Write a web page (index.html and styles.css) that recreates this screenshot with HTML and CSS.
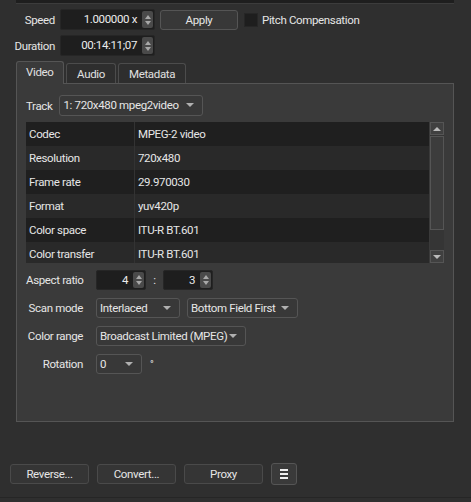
FILE: index.html
```html
<!DOCTYPE html>
<html lang="en">
<head>
    <meta charset="UTF-8">
    <title>Properties</title>
    <link rel="stylesheet" href="styles.css">
</head>
<body>
    <div class="topbar"></div>

    <div class="row speed-row">
        <label class="lbl">Speed</label>
        <div class="spin wide"><span class="val">1.000000 x</span><span class="arrows"><i class="up"></i><i class="down"></i></span></div>
        <button class="btn apply">Apply</button>
        <span class="check"></span>
        <span class="check-text">Pitch Compensation</span>
    </div>

    <div class="row dur-row">
        <label class="lbl">Duration</label>
        <div class="spin wide"><span class="val">00:14:11;07</span><span class="arrows"><i class="up"></i><i class="down"></i></span></div>
    </div>

    <div class="tabs">
        <div class="tab active">Video</div>
        <div class="tab">Audio</div>
        <div class="tab">Metadata</div>
    </div>

    <div class="pane">
        <div class="track-row">
            <label>Track</label>
            <div class="combo track">1: 720x480 mpeg2video<span class="caret"></span></div>
        </div>

        <div class="table-wrap">
            <div class="table">
                <div class="tr"><span class="k">Codec</span><span class="v">MPEG-2 video</span></div>
                <div class="tr"><span class="k">Resolution</span><span class="v">720x480</span></div>
                <div class="tr"><span class="k">Frame rate</span><span class="v">29.970030</span></div>
                <div class="tr"><span class="k">Format</span><span class="v">yuv420p</span></div>
                <div class="tr"><span class="k">Color space</span><span class="v">ITU-R BT.601</span></div>
                <div class="tr"><span class="k">Color transfer</span><span class="v">ITU-R BT.601</span></div>
            </div>
            <div class="scrollbar">
                <div class="sb-btn"><i class="tri-up"></i></div>
                <div class="sb-track"><div class="sb-handle"></div></div>
                <div class="sb-btn"><i class="tri-down"></i></div>
            </div>
        </div>

        <div class="form">
            <div class="frow">
                <label>Aspect ratio</label>
                <div class="spin small"><span class="val">4</span><span class="arrows"><i class="up"></i><i class="down"></i></span></div>
                <span class="sep">:</span>
                <div class="spin small"><span class="val">3</span><span class="arrows"><i class="up"></i><i class="down"></i></span></div>
            </div>
            <div class="frow">
                <label>Scan mode</label>
                <div class="combo scan">Interlaced<span class="caret"></span></div>
                <div class="combo field">Bottom Field First<span class="caret"></span></div>
            </div>
            <div class="frow">
                <label>Color range</label>
                <div class="combo range">Broadcast Limited (MPEG)<span class="caret"></span></div>
            </div>
            <div class="frow">
                <label>Rotation</label>
                <div class="combo rot">0<span class="caret"></span></div>
                <span class="deg">°</span>
            </div>
        </div>
    </div>

    <div class="actions">
        <button class="btn act">Reverse...</button>
        <button class="btn act">Convert...</button>
        <button class="btn act">Proxy</button>
        <button class="btn menu"><span class="bars"><i></i><i></i><i></i></span></button>
    </div>

    <div class="bottomline"></div>
</body>
</html>
```

FILE: styles.css
```css
body {
    margin: 0;
    width: 471px;
    height: 502px;
    overflow: hidden;
    background-color: #2f2f2f;
    font-family: 'Roboto', 'Liberation Sans', sans-serif;
    font-size: 11.5px;
    letter-spacing: -0.35px;
    color: #e6e6e6;
    display: flex;
    flex-direction: column;
}

.topbar {
    margin: 0 17px 0 16px;
    height: 3px;
    background-color: #1e1e1e;
    border-bottom: 1px solid #3c3c3c;
}

.row {
    display: flex;
    align-items: center;
    height: 21px;
}

.speed-row {
    margin-top: 5px;
}

.dur-row {
    margin-top: 5px;
}

.lbl {
    width: 55px;
    text-align: right;
    margin-right: 5px;
}

/* spin boxes */
.spin {
    display: flex;
    align-items: stretch;
    height: 21px;
    box-sizing: border-box;
    background-color: #1e1e1e;
    border: 1px solid #262626;
    border-radius: 2px;
}

.spin .val {
    flex: 1;
    text-align: right;
    padding-right: 5px;
    line-height: 19px;
    color: #ececec;
}

.spin .arrows {
    width: 11px;
    margin: 1px 1px 1px 0;
    background-color: #4a4a4a;
    border-radius: 2px;
    display: flex;
    flex-direction: column;
    justify-content: center;
    align-items: center;
    gap: 2px;
}

.arrows .up {
    width: 0;
    height: 0;
    border-left: 3px solid transparent;
    border-right: 3px solid transparent;
    border-bottom: 4px solid #a8a8a8;
}

.arrows .down {
    width: 0;
    height: 0;
    border-left: 3px solid transparent;
    border-right: 3px solid transparent;
    border-top: 4px solid #a8a8a8;
}

.spin.wide {
    width: 95px;
}

.spin.small {
    width: 50px;
}

/* buttons */
.btn {
    font-family: inherit;
    font-size: inherit;
    letter-spacing: inherit;
    color: #e6e6e6;
    background-color: #383838;
    border: 1px solid #555;
    border-radius: 3px;
    box-sizing: border-box;
    padding: 0;
}

.apply {
    width: 78px;
    height: 20px;
    margin-left: 5px;
}

.check {
    width: 12px;
    height: 12px;
    margin-left: 6px;
    background-color: #1e1e1e;
    border: 1px solid #262626;
}

.check-text {
    margin-left: 4px;
}

/* tabs */
.tabs {
    display: flex;
    align-items: flex-end;
    margin: 5px 0 0 16px;
    height: 22px;
}

.tab {
    height: 20px;
    line-height: 20px;
    padding: 0 10px;
    margin-right: 2px;
    box-sizing: border-box;
    background-color: #2e2e2e;
    border: 1px solid #4c4c4c;
    border-bottom: none;
    border-radius: 3px 3px 0 0;
    color: #e0e0e0;
}

.tab:nth-child(1) { width: 48px; }
.tab:nth-child(2) { width: 50px; text-align: center; }
.tab:nth-child(3) { width: 68px; text-align: center; }

.tab.active {
    height: 23px;
    margin-bottom: -1px;
    background-color: #3a3a3a;
    border-color: #555;
    position: relative;
    z-index: 1;
    line-height: 21px;
    padding-left: 9px;
}

.pane {
    margin-left: 16px;
    width: 438px;
    height: 339px;
    box-sizing: border-box;
    background-color: #3a3a3a;
    border: 1px solid #555;
    padding: 11px 9px 0 9px;
}

.track-row {
    display: flex;
    align-items: center;
    height: 21px;
}

.track-row label {
    margin-right: 7px;
}

.combo {
    position: relative;
    height: 21px;
    line-height: 19px;
    box-sizing: border-box;
    padding-left: 3px;
    background-color: #383838;
    border: 1px solid #555;
    border-radius: 3px;
    color: #e6e6e6;
    white-space: nowrap;
}

.combo .caret {
    position: absolute;
    right: 8px;
    top: 7px;
    width: 0;
    height: 0;
    border-left: 4px solid transparent;
    border-right: 4px solid transparent;
    border-top: 4px solid #b0b0b0;
}

.combo.track { width: 144px; }

/* properties table */
.table-wrap {
    display: flex;
    margin-top: 6px;
    height: 141px;
}

.table {
    width: 404px;
    overflow: hidden;
}

.tr {
    display: flex;
    height: 24px;
    line-height: 24px;
    background-color: #1f1f1f;
}

.tr:nth-child(even) {
    background-color: #292929;
}

.tr .k {
    width: 109px;
    padding-left: 3px;
    box-sizing: border-box;
    border-right: 1px solid #333;
}

.tr .v {
    padding-left: 3px;
}

.scrollbar {
    width: 14px;
    margin-left: 1px;
    display: flex;
    flex-direction: column;
    background-color: #3d3d3d;
}

.sb-btn {
    height: 13px;
    box-sizing: border-box;
    border: 1px solid #555;
    background-color: #404040;
    display: flex;
    align-items: center;
    justify-content: center;
}

.tri-up {
    width: 0;
    height: 0;
    border-left: 4px solid transparent;
    border-right: 4px solid transparent;
    border-bottom: 4px solid #bbb;
}

.tri-down {
    width: 0;
    height: 0;
    border-left: 4px solid transparent;
    border-right: 4px solid transparent;
    border-top: 4px solid #bbb;
}

.sb-track {
    flex: 1;
    background-color: #353535;
}

.sb-handle {
    height: 94px;
    margin-top: 1px;
    box-sizing: border-box;
    border: 1px solid #555;
    background-color: #3c3c3c;
}

/* form rows */
.form {
    margin-top: 7px;
    display: flex;
    flex-direction: column;
    gap: 8px;
}

.frow {
    display: flex;
    align-items: center;
    height: 20px;
}

.frow label {
    width: 57px;
    text-align: right;
    margin-right: 13px;
    white-space: nowrap;
}

.frow .spin {
    height: 20px;
}

.frow .spin .val {
    line-height: 18px;
}

.frow .combo {
    height: 20px;
    line-height: 18px;
}

.frow .combo .caret {
    top: 7px;
}

.sep {
    width: 17px;
    text-align: center;
}

.combo.scan { width: 84px; margin-right: 7px; }
.combo.field { width: 111px; }
.combo.range { width: 150px; }
.combo.rot { width: 46px; }

.deg {
    margin-left: 8px;
    font-size: 10px;
}

/* bottom actions */
.actions {
    display: flex;
    align-items: center;
    gap: 8px;
    margin: 41px 0 0 10px;
    height: 22px;
}

.btn.act {
    width: 79px;
    height: 20px;
    background-color: #353535;
    border-color: #4a4a4a;
}

.btn.menu {
    width: 26px;
    height: 22px;
    background-color: #3a3a3a;
    border-color: #555;
    display: flex;
    align-items: center;
    justify-content: center;
}

.bars {
    display: flex;
    flex-direction: column;
    gap: 2px;
}

.bars i {
    display: block;
    width: 8px;
    height: 2px;
    background-color: #eee;
}

.bottomline {
    margin-top: 12px;
    height: 1px;
    background-color: #262626;
}
```
